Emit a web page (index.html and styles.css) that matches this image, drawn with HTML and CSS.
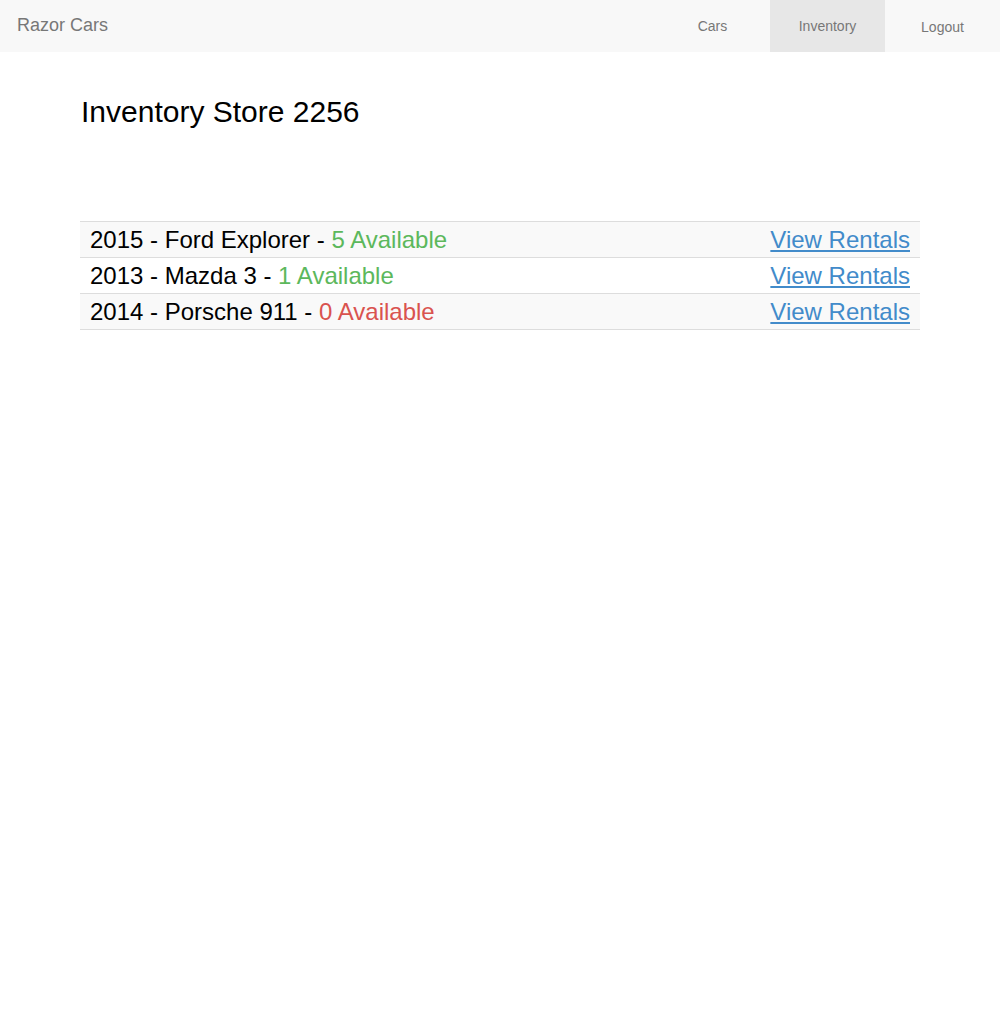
FILE: index.html
```html
<!DOCTYPE html>
<html>
<head>
<meta charset="utf-8">
<link rel="stylesheet" href="styles.css">
</head>
<body>
<nav class="navbar">
  <a class="brand" href="#">Razor Cars</a>
  <ul class="nav">
    <li><a href="#">Cars</a></li>
    <li class="active"><a href="#">Inventory</a></li>
    <li class="logout"><a href="#">Logout</a></li>
  </ul>
</nav>
<main class="content">
  <h2 class="title">Inventory Store 2256</h2>
  <div class="list">
    <div class="row striped">
      <span>2015 - Ford Explorer - <span class="ok">5 Available</span></span>
      <a class="link" href="#">View Rentals</a>
    </div>
    <div class="row">
      <span>2013 - Mazda 3 - <span class="ok">1 Available</span></span>
      <a class="link" href="#">View Rentals</a>
    </div>
    <div class="row striped">
      <span>2014 - Porsche 911 - <span class="none">0 Available</span></span>
      <a class="link" href="#">View Rentals</a>
    </div>
  </div>
</main>
</body>
</html>
```

FILE: styles.css
```css
html, body {
  margin: 0;
  padding: 0;
  background: #fff;
  font-family: "Liberation Sans", Arial, Helvetica, sans-serif;
  color: #000;
}

.navbar {
  display: flex;
  justify-content: space-between;
  align-items: stretch;
  height: 52px;
  background: #f8f8f8;
}

.brand {
  padding: 15px 0 0 17px;
  font-size: 18px;
  line-height: 20px;
  color: #777;
  text-decoration: none;
}

.nav {
  display: flex;
  margin: 0;
  padding: 0;
  list-style: none;
}

.nav li {
  width: 115px;
  text-align: center;
}

.nav li a {
  display: block;
  height: 100%;
  box-sizing: border-box;
  padding-top: 16px;
  font-size: 14px;
  line-height: 20px;
  color: #777;
  text-decoration: none;
}

.nav li.logout a {
  padding-top: 17px;
}

.nav li.active {
  background: #e7e7e7;
}

.content {
  padding: 0 80px;
}

.title {
  margin: 43px 0 93px 1px;
  font-size: 30px;
  font-weight: normal;
  line-height: 33px;
}

.list {
  border-top: 1px solid #ddd;
}

.row {
  display: flex;
  justify-content: space-between;
  padding: 4px 10px;
  font-size: 24px;
  line-height: 27px;
  border-bottom: 1px solid #ddd;
}

.row.striped {
  background: #f9f9f9;
}

.ok {
  color: #5cb85c;
}

.none {
  color: #d9534f;
}

.link {
  color: #428bca;
  text-decoration: underline;
}
```
